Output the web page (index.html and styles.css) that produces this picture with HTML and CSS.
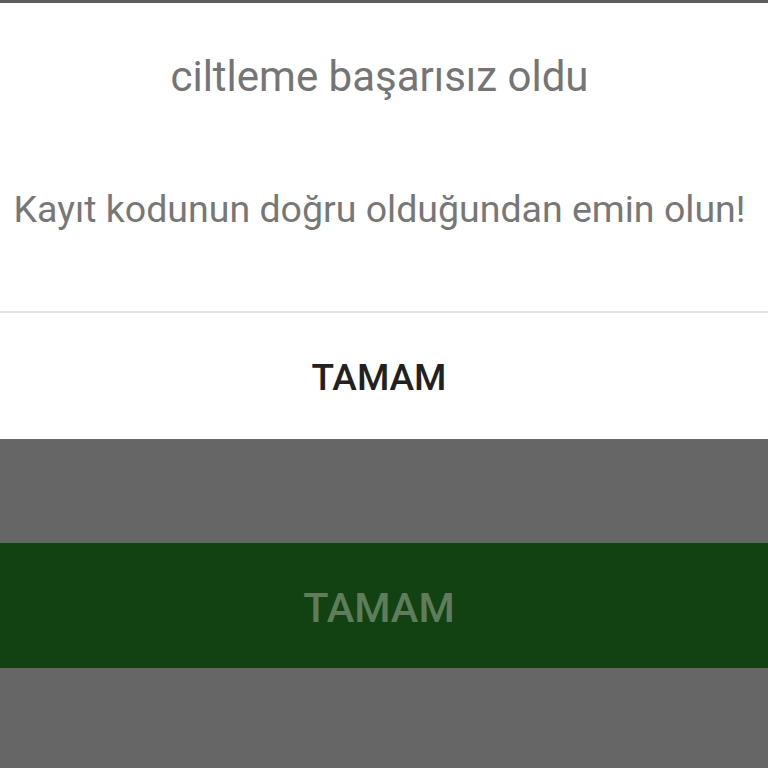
FILE: index.html
```html
<!DOCTYPE html>
<html lang="tr">
<head>
    <meta charset="UTF-8">
    <meta name="viewport" content="width=device-width, initial-scale=1.0">
    <title>Hata</title>
    <link rel="stylesheet" href="styles.css">
</head>
<body>
    <div class="top-bar"></div>
    <div class="dialog">
        <div class="dialog-title">ciltleme başarısız oldu</div>
        <div class="dialog-message">Kayıt kodunun doğru olduğundan emin olun!</div>
        <div class="dialog-actions">
            <button class="dialog-button">TAMAM</button>
        </div>
    </div>
    <div class="backdrop">
        <div class="gap-top"></div>
        <button class="green-button">TAMAM</button>
        <div class="gap-bottom"></div>
    </div>
</body>
</html>
```

FILE: styles.css
```css
body {
    margin: 0;
    font-family: Roboto, 'Noto Sans', sans-serif;
    background-color: #666666;
    width: 768px;
    height: 768px;
    overflow: hidden;
}
.top-bar {
    height: 3px;
    background-color: #5e5e5e;
}
.dialog {
    background-color: #ffffff;
    height: 436px;
    display: flex;
    flex-direction: column;
}
.dialog-title {
    height: 146px;
    display: flex;
    align-items: center;
    justify-content: center;
    font-size: 42px;
    color: #757575;
    padding-right: 9px;
}
.dialog-message {
    height: 120px;
    display: flex;
    align-items: center;
    justify-content: center;
    font-size: 37.5px;
    color: #777777;
    padding-bottom: 42px;
    padding-right: 9px;
    white-space: nowrap;
}
.dialog-actions {
    border-top: 2px solid #e4e4e4;
    flex: 1;
    display: flex;
}
.dialog-button {
    flex: 1;
    background: none;
    border: none;
    font-family: inherit;
    font-size: 37px;
    font-weight: 500;
    color: #212121;
    padding: 2px 10px 0 0;
}
.backdrop {
    display: flex;
    flex-direction: column;
}
.gap-top {
    height: 104px;
}
.green-button {
    height: 125px;
    background-color: #134212;
    border: none;
    font-family: inherit;
    font-size: 41.5px;
    font-weight: 500;
    color: #5f7d5b;
    padding: 3px 10px 0 0;
}
.gap-bottom {
    height: 100px;
}
```
